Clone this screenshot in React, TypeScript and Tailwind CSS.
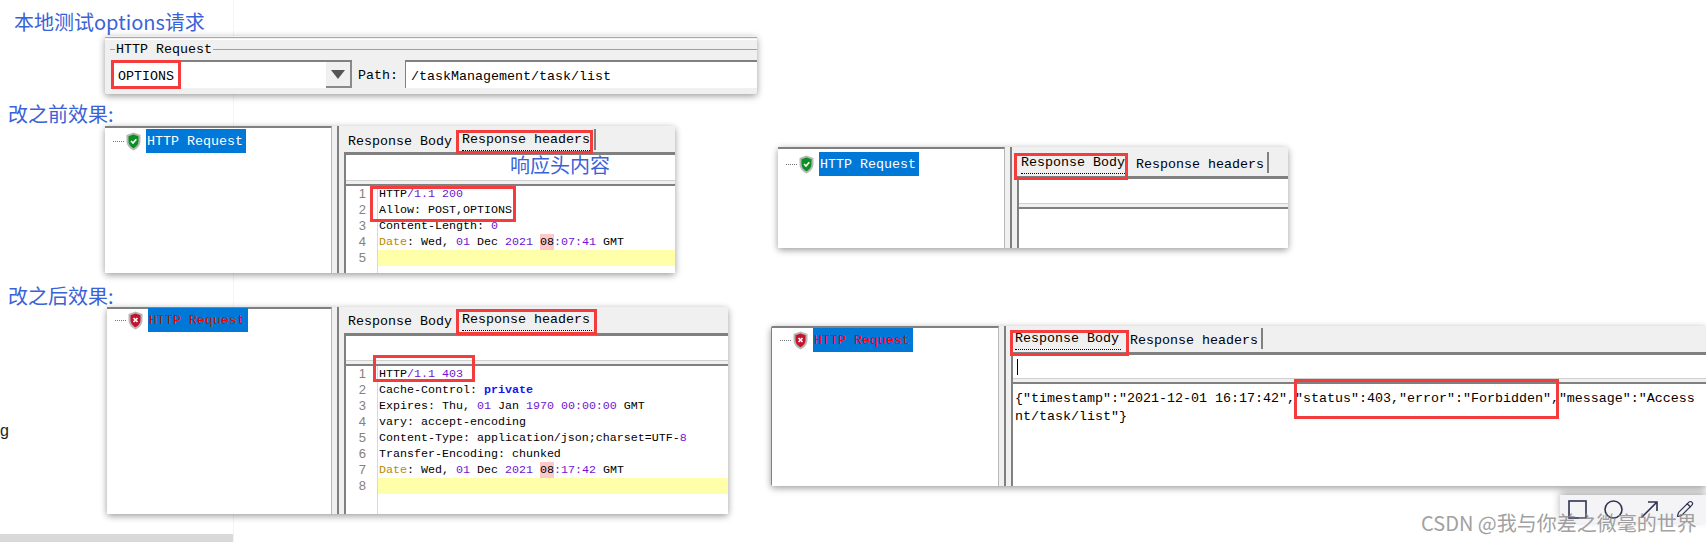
import React from "react";
import { Pencil } from "lucide-react";

const MONO = "font-['Liberation_Mono',monospace]";
const CJK = "font-['Noto_Sans_CJK_SC','Noto_Sans',sans-serif]";

const P = ({ children }: { children: React.ReactNode }) => <span className="text-[#6f14cf]">{children}</span>;

function RedBox({ className }: { className: string }) {
  return <div className={`absolute border-[3px] border-[#f53c3c] pointer-events-none ${className}`} />;
}

function Shield({ ok }: { ok: boolean }) {
  return (
    <svg width="15" height="19" viewBox="0 0 15 19" className="shrink-0">
      <path d="M7.5 0.5 L14.5 3 V9 C14.5 13.5 11 17 7.5 18.5 C4 17 0.5 13.5 0.5 9 V3 Z" fill="#b5b8b5" />
      <path d="M7.5 2.5 L12.5 4.3 V9 C12.5 12.4 10 15 7.5 16.2 C5 15 2.5 12.4 2.5 9 V4.3 Z" fill={ok ? "#0b8f22" : "#c5122e"} />
      {ok ? (
        <path d="M5 9 L7 11 L10.3 7.2" fill="none" stroke="#ffffff" strokeWidth="1.7" />
      ) : (
        <path d="M5.5 7 L9.5 11 M9.5 7 L5.5 11" fill="none" stroke="#ffffff" strokeWidth="1.7" />
      )}
    </svg>
  );
}

function Tree({ ok, width, rowTop }: { ok: boolean; width: string; rowTop: string }) {
  return (
    <div className={`${width} shrink-0 bg-white border-t-2 border-[#808080] border-r border-r-[#b8b8b8] pl-[8px]`}>
      <div className={`flex items-center h-[24px] ${rowTop}`}>
        <div className="w-[11px] border-t border-dotted border-[#777] mr-[2px]" />
        <Shield ok={ok} />
        <span className={`ml-[5px] w-[100px] h-[24px] leading-[25px] bg-[#0078d7] text-[13.33px] pl-px ${MONO} ${ok ? "text-white" : "text-[#ff0000]"}`}>
          HTTP Request
        </span>
      </div>
    </div>
  );
}

function Tabs({ active, strip }: { active: "body" | "headers"; strip: string }) {
  const body = active === "body";
  return (
    <div className={`flex items-start text-[13.33px] text-black ${strip} ${MONO}`}>
      <div className={`h-[23px] w-[116px] pl-[4px] ${body ? "leading-[22px]" : "leading-[26px]"}`}>
        <span className={body ? "inline-block border-b border-dotted border-black h-[22px] w-[106px]" : ""}>Response Body</span>
      </div>
      <div className={`h-[21px] w-[136px] border-r-2 border-[#808080] ${body ? "pl-[3px] leading-[26px]" : "pl-[2px] leading-[22px]"}`}>
        <span className={body ? "" : "inline-block border-b border-dotted border-black h-[22px] w-[130px]"}>Response headers</span>
      </div>
    </div>
  );
}

function Pane({
  active,
  inputH,
  strip,
  children,
  caret,
}: {
  active: "body" | "headers";
  inputH: string;
  strip: string;
  children?: React.ReactNode;
  caret?: boolean;
}) {
  return (
    <div className="flex-1 min-w-0 flex flex-col ml-[5px] border-l-2 border-[#808080] bg-[#f0f0f0] pl-[5px]">
      <Tabs active={active} strip={strip} />
      <div className="flex-1 min-h-0 flex flex-col border-l-2 border-t-[3px] border-[#808080] overflow-hidden">
        <div className={`${inputH} bg-white border-b border-[#d0d0d0] shrink-0 flex items-center pl-[4px]`}>
          {caret && <div className="w-px h-[16px] bg-black" />}
        </div>
        <div className="h-[3px] shrink-0 bg-[#f0f0f0]" />
        <div className="flex-1 min-h-0 bg-white border-t-2 border-[#808080]">{children}</div>
      </div>
    </div>
  );
}

function Panel({ className, children }: { className: string; children: React.ReactNode }) {
  return <div className={`relative flex shrink-0 bg-[#f0f0f0] rounded-[2px] shadow-[0_2px_7px_rgba(0,0,0,0.4)] ${className}`}>{children}</div>;
}

function Code({ lines }: { lines: React.ReactNode[] }) {
  return (
    <div className={`relative h-full text-[11.67px] text-black ${MONO}`}>
      <div className="absolute left-[31px] top-0 bottom-0 w-px bg-[#d8d8d8]" />
      {lines.map((line, i) => (
        <div key={i} className="flex h-[16px] leading-[16px] whitespace-pre">
          <span className="w-[20px] text-right text-[#8a8078] text-[13px] shrink-0 font-['Liberation_Sans',sans-serif]">{i + 1}</span>
          <span className={`ml-[12px] flex-1 pl-px ${i === lines.length - 1 ? "bg-[#ffffaa]" : ""}`}>{line}</span>
        </div>
      ))}
    </div>
  );
}

const Hour = () => <span className="inline-block bg-[#ffc8c8] h-[17px]">08</span>;
const DateKey = () => <span className="text-[#b88a00]">Date</span>;

const beforeLines: React.ReactNode[] = [
  <>HTTP<P>/1.1 200</P></>,
  <>Allow: POST,OPTIONS</>,
  <>Content-Length: <P>0</P></>,
  <><DateKey />: Wed, <P>01</P> Dec <P>2021</P> <Hour /><P>:07:41</P> GMT</>,
  <></>,
];

const afterLines: React.ReactNode[] = [
  <>HTTP<P>/1.1 403</P></>,
  <>Cache-Control: <span className="font-bold text-[#1414f0]">private</span></>,
  <>Expires: Thu, <P>01</P> Jan <P>1970 00:00:00</P> GMT</>,
  <>vary: accept-encoding</>,
  <>Content-Type: application/json;charset=UTF-<P>8</P></>,
  <>Transfer-Encoding: chunked</>,
  <><DateKey />: Wed, <P>01</P> Dec <P>2021</P> <Hour /><P>:17:42</P> GMT</>,
  <></>,
];

function Heading({ className, children }: { className: string; children: React.ReactNode }) {
  return <div className={`text-[20px] text-[#3a62d8] whitespace-nowrap ${CJK} ${className}`}>{children}</div>;
}

function RequestCard() {
  return (
    <Panel className={`ml-[105px] w-[652px] h-[58px] flex-col text-black text-[13.33px] ${MONO}`}>
      <div className="h-[3px] mt-px border-t border-[#a8a8a8] border-b border-b-white shrink-0" />
      <div className="flex items-center h-[15px] mt-[2px] pl-[5px] shrink-0">
        <div className="w-[5px] border-t border-[#a0a0a0]" />
        <span className="px-px leading-[15px]">HTTP Request</span>
        <div className="flex-1 border-t border-[#a0a0a0]" />
      </div>
      <div className="flex h-[28px] mt-[3px] ml-[5px] items-stretch border-l border-transparent">
        <div className="w-[241px] flex bg-white border-t-2 border-l border-[#808080]">
          <span className="flex-1 pl-[6px] leading-[29px]">OPTIONS</span>
          <div className="w-[26px] bg-[#f0f0f0] border-r-2 border-b-2 border-[#8a8a8a] flex items-center justify-center">
            <div className="w-0 h-0 border-l-[7px] border-r-[7px] border-t-[9px] border-l-transparent border-r-transparent border-t-[#555]" />
          </div>
        </div>
        <span className="ml-[6px] w-[47px] leading-[31px]">Path:</span>
        <div className="flex-1 bg-white border-t-2 border-l border-[#808080] pl-[5px] leading-[29px]">/taskManagement/task/list</div>
      </div>
      <RedBox className="left-[6px] top-[24px] w-[70px] h-[29px]" />
    </Panel>
  );
}

function Toolbar() {
  return (
    <div className="self-end mt-[9px] w-[146px] h-[28px] bg-[#f4f4f6] shadow-[0_-3px_8px_rgba(0,0,0,0.3)] flex items-center pl-[8px] gap-[17px] text-[#2f3350]">
      <svg width="19" height="19" viewBox="0 0 19 19" className="shrink-0">
        <rect x="1" y="1" width="17" height="17" fill="none" stroke="currentColor" strokeWidth="1.6" />
      </svg>
      <svg width="19" height="19" viewBox="0 0 19 19" className="shrink-0">
        <circle cx="9.5" cy="9.5" r="8.5" fill="none" stroke="currentColor" strokeWidth="1.6" />
      </svg>
      <svg width="19" height="19" viewBox="0 0 19 19" className="shrink-0">
        <path d="M1.5 17.5 L17 2 M8 2 H17 V11" fill="none" stroke="currentColor" strokeWidth="1.6" />
      </svg>
      <Pencil size={18} strokeWidth={1.6} className="shrink-0" />
    </div>
  );
}

export default function App() {
  return (
    <div className="relative w-[1706px] h-[542px] overflow-hidden bg-white">
      <div className="absolute left-0 top-0 w-[234px] h-full border-r border-[#f4f4f4] flex flex-col">
        <div className="mt-[419px] text-[16px] leading-[24px] text-[#222] font-['Liberation_Sans',sans-serif]">g</div>
        <div className="mt-auto h-[8px] bg-[#d9d9d9]" />
      </div>

      <div className="relative flex h-full">
        <div className="w-[760px] shrink-0 flex flex-col">
          <Heading className="mt-[8px] ml-[14px] h-[28px] leading-[28px]">本地测试options请求</Heading>
          <RequestCard />
          <Heading className="mt-[7px] ml-[8px] h-[25px] leading-[25px]">改之前效果:</Heading>
          <Panel className="ml-[105px] w-[570px] h-[147px]">
            <Tree ok width="w-[227px]" rowTop="mt-px" />
            <Pane active="headers" inputH="h-[26px]" strip="h-[26px] pt-[3px]">
              <Code lines={beforeLines} />
            </Pane>
            <div className={`absolute left-[405px] top-[28px] text-[20px] leading-[22px] text-[#3a62d8] ${CJK}`}>响应头内容</div>
            <RedBox className="left-[351px] top-[4px] w-[137px] h-[24px]" />
            <RedBox className="left-[265px] top-[60px] w-[146px] h-[36px]" />
          </Panel>
          <Heading className="mt-[12px] ml-[8px] h-[22px] leading-[22px]">改之后效果:</Heading>
          <Panel className="ml-[107px] w-[621px] h-[207px]">
            <Tree ok={false} width="w-[225px]" rowTop="-mt-px" />
            <Pane active="headers" inputH="h-[25px]" strip="h-[26px] pt-[2px]">
              <Code lines={afterLines} />
            </Pane>
            <RedBox className="left-[349px] top-[2px] w-[141px] h-[26px]" />
            <RedBox className="left-[266px] top-[48px] w-[102px] h-[27px]" />
          </Panel>
        </div>

        <div className="flex-1 min-w-0 flex flex-col">
          <Panel className="mt-[147px] ml-[18px] w-[510px] h-[101px]">
            <Tree ok width="w-[227px]" rowTop="mt-[3px]" />
            <Pane active="body" inputH="h-[25px]" strip="h-[29px] pt-[5px]" />
            <RedBox className="left-[236px] top-[6px] w-[114px] h-[27px]" />
          </Panel>
          <Panel className="mt-[78px] ml-[11px] w-[935px] h-[160px] border-l border-[#808080]">
            <Tree ok={false} width="w-[227px]" rowTop="mt-0" />
            <Pane active="body" inputH="h-[24px]" strip="h-[26px] pt-[2px]" caret>
              <div className={`pt-[6px] pl-[2px] text-[13.33px] leading-[18px] text-black whitespace-pre ${MONO}`}>
                <div>{'{"timestamp":"2021-12-01 16:17:42","status":403,"error":"Forbidden","message":"Access'}</div>
                <div>{'nt/task/list"}'}</div>
              </div>
            </Pane>
            <RedBox className="left-[522px] top-[53px] w-[265px] h-[40px]" />
            <RedBox className="left-[238px] top-[4px] w-[119px] h-[26px]" />
          </Panel>
          <Toolbar />
        </div>
      </div>

      <div className={`absolute left-[1421px] top-[511px] text-[20px] leading-[24px] text-[#8a8a8a] opacity-80 whitespace-nowrap ${CJK}`}>
        CSDN @我与你差之微毫的世界
      </div>
    </div>
  );
}
